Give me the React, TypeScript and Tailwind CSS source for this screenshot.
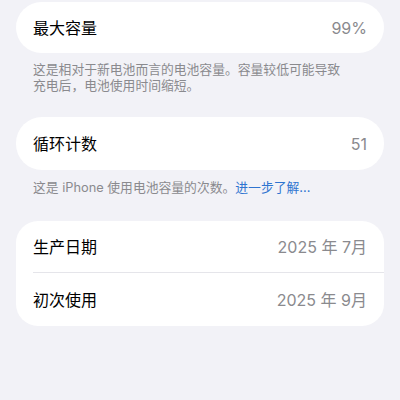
import React from "react";

const font = { fontFamily: 'Inter, "Noto Sans CJK SC", sans-serif' };

export default function App() {
  return (
    <div
      className="w-[400px] h-[400px] bg-[#f2f2f7] px-4 pt-[2px] overflow-hidden"
      style={font}
    >
      <div className="h-[51px] bg-white rounded-[26px] flex items-center justify-between pl-[17px] pr-[17px]">
        <span className="text-[16px] text-black">最大容量</span>
        <span className="text-[16px] text-[#8a8a8e]">99%</span>
      </div>
      <div className="mt-[9px] pl-[17px] w-[330px] text-[12.8px] leading-[16px] text-[#8a8a8e]">
        这是相对于新电池而言的电池容量。容量较低可能导致充电后，电池使用时间缩短。
      </div>

      <div className="mt-[23px] h-[53px] bg-white rounded-[26px] flex items-center justify-between pl-[17px] pr-[17px]">
        <span className="text-[16px] text-black">循环计数</span>
        <span className="text-[16px] text-[#8a8a8e]">51</span>
      </div>
      <div className="mt-[10px] pl-[17px] text-[12.8px] leading-[16px] text-[#8a8a8e]">
        这是 iPhone 使用电池容量的次数。<span className="text-[#2f74d0]">进一步了解...</span>
      </div>

      <div className="mt-[25px] bg-white rounded-[22px] pl-[17px]">
        <div className="h-[52px] flex items-center justify-between pr-[17px] border-b border-[#e5e5ea]">
          <span className="text-[16px] text-black">生产日期</span>
          <span className="text-[16px] text-[#8a8a8e]">2025 年 7月</span>
        </div>
        <div className="h-[53px] flex items-center justify-between pr-[17px]">
          <span className="text-[16px] text-black">初次使用</span>
          <span className="text-[16px] text-[#8a8a8e]">2025 年 9月</span>
        </div>
      </div>
    </div>
  );
}
